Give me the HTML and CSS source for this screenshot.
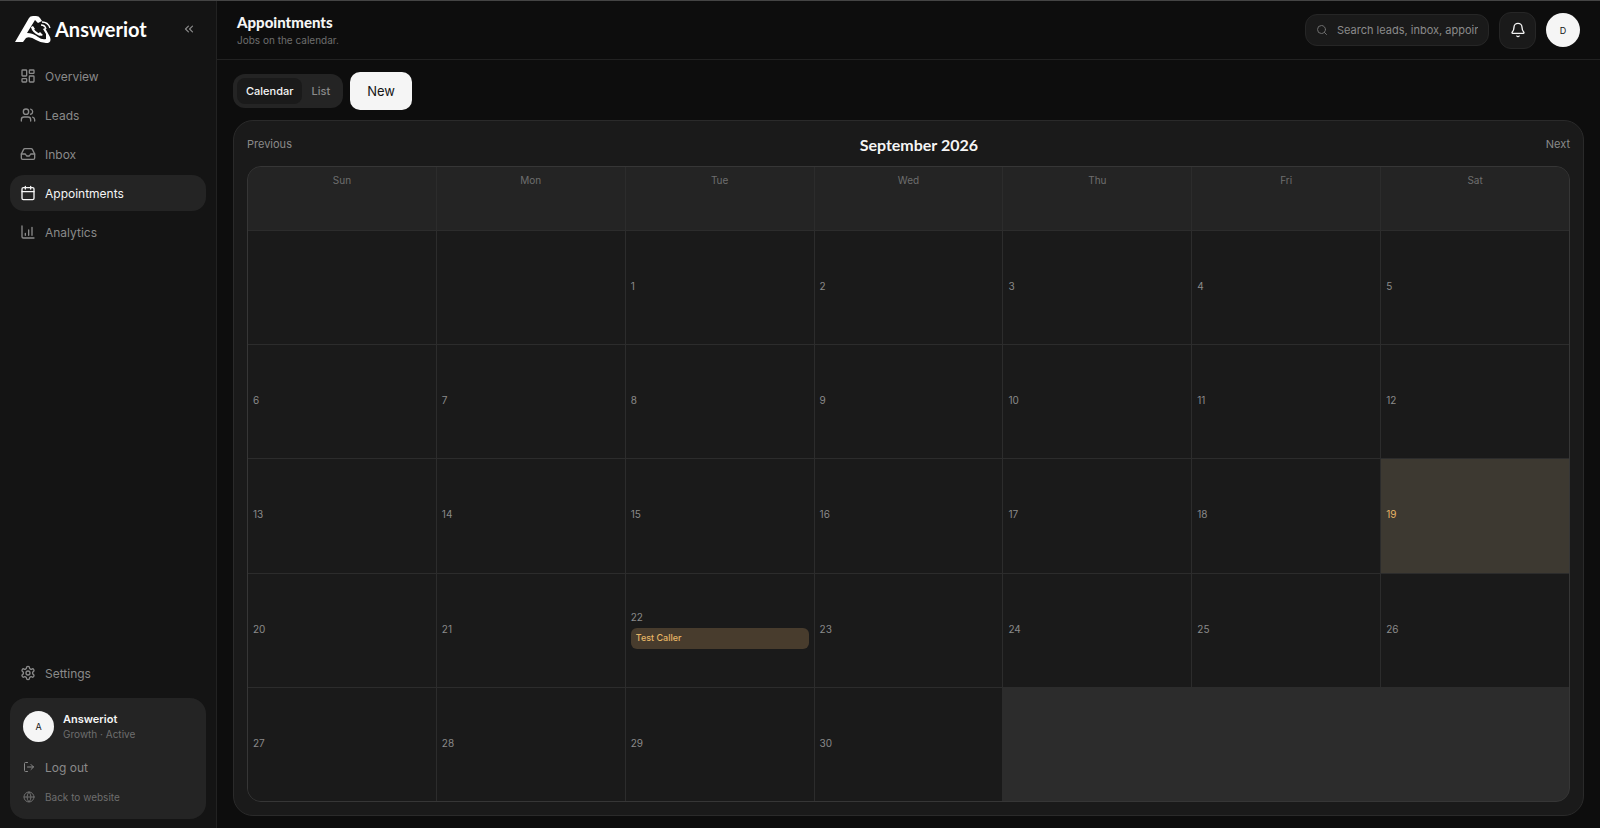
FILE: index.html
```html
<!DOCTYPE html>
<html lang="en">
  <head>
    <meta charset="UTF-8" />
    <meta name="viewport" content="width=device-width, initial-scale=1.0" />
    <title>Appointments - Answeriot</title>
    <link rel="stylesheet" href="styles.css">
  </head>
  <body>
    <div class="app">
      <!-- Sidebar -->
      <aside class="sidebar">
        <div class="brand">
          <a class="logo" href="#">
            <svg class="logo-mark" viewBox="0 0 36 28" fill="#fff">
              <path d="M0 27 L14 3 Q15 1 18 1 H21 Q24 1 25 3 L27 6 L23 8 L20 5 L12 18 Q18 18 23 22 Q27 25 31 24 L31 19 L28 14 L30 13 L35 22 Q37 28 31 28 Q26 28 21 25 Q15 21 11 23 L8 27 Z" />
              <path d="M17 12 Q18 17 25 20" fill="none" stroke="#fff" stroke-width="2" />
              <path d="M16 12 L18 11 L20 14 L18 15 Z M23 19 L25 17 L28 20 L26 21 Z" />
              <path d="M26 10 Q30 10 31 14 M27 7 Q33 7 35 13" fill="none" stroke="#fff" stroke-width="1.3" />
            </svg>
            <span>Answeriot</span>
          </a>
          <button class="collapse" aria-label="Collapse sidebar">
            <svg class="icon" viewBox="0 0 24 24"><path d="m11 17-5-5 5-5M18 17l-5-5 5-5" /></svg>
          </button>
        </div>

        <nav class="nav">
          <a href="#">
            <svg class="icon" viewBox="0 0 24 24"><rect x="3" y="3" width="7" height="9" rx="1" /><rect x="14" y="3" width="7" height="5" rx="1" /><rect x="14" y="12" width="7" height="9" rx="1" /><rect x="3" y="16" width="7" height="5" rx="1" /></svg>
            Overview
          </a>
          <a href="#">
            <svg class="icon" viewBox="0 0 24 24"><path d="M16 21v-2a4 4 0 0 0-4-4H6a4 4 0 0 0-4 4v2" /><circle cx="9" cy="7" r="4" /><path d="M22 21v-2a4 4 0 0 0-3-3.87M16 3.13a4 4 0 0 1 0 7.75" /></svg>
            Leads
          </a>
          <a href="#">
            <svg class="icon" viewBox="0 0 24 24"><path d="M22 12h-6l-2 3h-4l-2-3H2" /><path d="M5.45 5.11 2 12v6a2 2 0 0 0 2 2h16a2 2 0 0 0 2-2v-6l-3.45-6.89A2 2 0 0 0 16.76 4H7.24a2 2 0 0 0-1.79 1.11z" /></svg>
            Inbox
          </a>
          <a href="#" class="active">
            <svg class="icon" viewBox="0 0 24 24"><path d="M8 2v4M16 2v4M3 10h18" /><rect x="3" y="4" width="18" height="18" rx="2" /></svg>
            Appointments
          </a>
          <a href="#">
            <svg class="icon" viewBox="0 0 24 24"><path d="M3 3v16a2 2 0 0 0 2 2h16M8 17v-3M13 17V9M18 17V5" /></svg>
            Analytics
          </a>
        </nav>

        <nav class="nav nav-bottom">
          <a href="#">
            <svg class="icon" viewBox="0 0 24 24"><path d="M12.22 2h-.44a2 2 0 0 0-2 2v.18a2 2 0 0 1-1 1.73l-.43.25a2 2 0 0 1-2 0l-.15-.08a2 2 0 0 0-2.73.73l-.22.38a2 2 0 0 0 .73 2.73l.15.1a2 2 0 0 1 1 1.72v.51a2 2 0 0 1-1 1.74l-.15.09a2 2 0 0 0-.73 2.73l.22.38a2 2 0 0 0 2.73.73l.15-.08a2 2 0 0 1 2 0l.43.25a2 2 0 0 1 1 1.73V20a2 2 0 0 0 2 2h.44a2 2 0 0 0 2-2v-.18a2 2 0 0 1 1-1.73l.43-.25a2 2 0 0 1 2 0l.15.08a2 2 0 0 0 2.73-.73l.22-.39a2 2 0 0 0-.73-2.73l-.15-.08a2 2 0 0 1-1-1.74v-.5a2 2 0 0 1 1-1.74l.15-.09a2 2 0 0 0 .73-2.73l-.22-.38a2 2 0 0 0-2.73-.73l-.15.08a2 2 0 0 1-2 0l-.43-.25a2 2 0 0 1-1-1.73V4a2 2 0 0 0-2-2z" /><circle cx="12" cy="12" r="3" /></svg>
            Settings
          </a>
        </nav>

        <div class="account">
          <div class="account-head">
            <span class="avatar avatar-sm">A</span>
            <div>
              <div class="account-name">Answeriot</div>
              <div class="account-plan">Growth · Active</div>
            </div>
          </div>
          <button class="account-link">
            <svg class="icon" viewBox="0 0 24 24"><path d="M9 21H5a2 2 0 0 1-2-2V5a2 2 0 0 1 2-2h4M16 17l5-5-5-5M21 12H9" /></svg>
            Log out
          </button>
          <a class="account-link site-link" href="#">
            <svg class="icon" viewBox="0 0 24 24"><circle cx="12" cy="12" r="10" /><path d="M12 2a14.5 14.5 0 0 0 0 20 14.5 14.5 0 0 0 0-20M2 12h20" /></svg>
            Back to website
          </a>
        </div>
      </aside>

      <div class="main">
        <header class="topbar">
          <div>
            <h1>Appointments</h1>
            <p>Jobs on the calendar.</p>
          </div>
          <div class="topbar-actions">
            <label class="search">
              <svg class="icon" viewBox="0 0 24 24"><circle cx="11" cy="11" r="8" /><path d="m21 21-4.3-4.3" /></svg>
              <input type="text" aria-label="Search" placeholder="Search leads, inbox, appointments" />
            </label>
            <button class="bell" aria-label="Notifications">
              <svg class="icon" viewBox="0 0 24 24"><path d="M10.27 21a2 2 0 0 0 3.46 0M3.26 15.33A1 1 0 0 0 4 17h16a1 1 0 0 0 .74-1.67C19.41 13.96 18 12.5 18 8A6 6 0 0 0 6 8c0 4.5-1.41 5.96-2.74 7.33" /></svg>
            </button>
            <button class="avatar">D</button>
          </div>
        </header>

        <main class="content">
          <div class="toolbar">
            <div class="tabs">
              <button class="tab active">Calendar</button>
              <button class="tab">List</button>
            </div>
            <button class="new-btn">New</button>
          </div>

          <section class="panel">
            <div class="month-nav">
              <button>Previous</button>
              <h2>September 2026</h2>
              <button>Next</button>
            </div>

            <div class="calendar">
              <div class="weekday">Sun</div>
              <div class="weekday">Mon</div>
              <div class="weekday">Tue</div>
              <div class="weekday">Wed</div>
              <div class="weekday">Thu</div>
              <div class="weekday">Fri</div>
              <div class="weekday">Sat</div>

              <div class="day"></div>
              <div class="day"></div>
              <div class="day">1</div>
              <div class="day">2</div>
              <div class="day">3</div>
              <div class="day">4</div>
              <div class="day">5</div>

              <div class="day">6</div>
              <div class="day">7</div>
              <div class="day">8</div>
              <div class="day">9</div>
              <div class="day">10</div>
              <div class="day">11</div>
              <div class="day">12</div>

              <div class="day">13</div>
              <div class="day">14</div>
              <div class="day">15</div>
              <div class="day">16</div>
              <div class="day">17</div>
              <div class="day">18</div>
              <div class="day today">19</div>

              <div class="day">20</div>
              <div class="day">21</div>
              <div class="day">
                22
                <button class="event">Test Caller</button>
              </div>
              <div class="day">23</div>
              <div class="day">24</div>
              <div class="day">25</div>
              <div class="day">26</div>

              <div class="day">27</div>
              <div class="day">28</div>
              <div class="day">29</div>
              <div class="day">30</div>
            </div>
          </section>
        </main>
      </div>
    </div>
  </body>
</html>
```
FILE: styles.css
```css
* {
  box-sizing: border-box;
}
body {
  margin: 0;
  font-family: Inter, "Liberation Sans", sans-serif;
  font-size: 12px;
  background-color: #0d0d0d;
  color: #f5f5f5;
}
h1,
h2,
p {
  margin: 0;
}
a {
  color: inherit;
  text-decoration: none;
}
button {
  padding: 0;
  border: none;
  background: none;
  color: inherit;
  font: inherit;
  cursor: pointer;
}
.icon {
  width: 16px;
  height: 16px;
  flex-shrink: 0;
  fill: none;
  stroke: currentColor;
  stroke-width: 2;
  stroke-linecap: round;
  stroke-linejoin: round;
}
.app {
  display: flex;
  min-height: 100vh;
  border-top: 1px solid #444;
}

/* sidebar */
.sidebar {
  display: flex;
  flex-direction: column;
  width: 217px;
  flex-shrink: 0;
  padding: 9px 10px;
  background-color: #141414;
  border-right: 1px solid #222;
}
.brand {
  display: flex;
  align-items: center;
  justify-content: space-between;
  height: 38px;
  margin-bottom: 10px;
  padding: 0 10px 0 5px;
}
.logo {
  display: flex;
  align-items: center;
  gap: 4px;
  color: #fff;
  font-family: Lato, sans-serif;
  font-size: 20px;
  font-weight: 700;
}
.logo-mark {
  width: 36px;
  height: 28px;
}
.collapse {
  display: flex;
  color: #8a8a8a;
}
.collapse .icon {
  width: 14px;
  height: 14px;
}
.nav {
  display: flex;
  flex-direction: column;
  gap: 3px;
}
.nav a {
  display: flex;
  align-items: center;
  gap: 9px;
  height: 36px;
  padding: 0 10px;
  border-radius: 14px;
  color: #8a8a8a;
}
.nav a.active {
  background-color: #242424;
  color: #f5f5f5;
}
.nav-bottom {
  margin-top: auto;
}
.account {
  margin-top: 7px;
  padding: 13px;
  height: 121px;
  border-radius: 16px;
  background-color: #242424;
}
.account-head {
  display: flex;
  align-items: center;
  gap: 9px;
  margin-bottom: 10px;
}
.account-name {
  font-size: 11px;
  line-height: 15px;
  font-weight: 600;
}
.account-plan {
  font-size: 10px;
  line-height: 15px;
  color: #6e6e6e;
}
.account-link {
  display: flex;
  align-items: center;
  gap: 10px;
  height: 30px;
  color: #8a8a8a;
}
.account-link .icon {
  width: 12px;
  height: 12px;
}
.site-link {
  font-size: 10px;
  color: #6e6e6e;
}
.avatar {
  display: flex;
  align-items: center;
  justify-content: center;
  width: 34px;
  height: 34px;
  border-radius: 50%;
  background-color: #f5f5f5;
  color: #141414;
  font-size: 9px;
}
.avatar-sm {
  width: 31px;
  height: 31px;
}

/* top bar */
.main {
  display: flex;
  flex-direction: column;
  flex: 1;
  min-width: 0;
}
.topbar {
  display: flex;
  align-items: center;
  justify-content: space-between;
  height: 59px;
  padding: 0 20px;
  border-bottom: 1px solid #222;
}
.topbar h1 {
  font-family: Lato, sans-serif;
  font-size: 15px;
  line-height: 20px;
  font-weight: 900;
}
.topbar p {
  font-size: 10px;
  line-height: 16px;
  color: #6e6e6e;
}
.topbar-actions {
  display: flex;
  align-items: center;
  gap: 10px;
}
.search {
  display: flex;
  align-items: center;
  gap: 9px;
  width: 184px;
  height: 32px;
  padding: 0 10px;
  border: 1px solid #262626;
  border-radius: 12px;
  background-color: #1a1a1a;
  color: #6e6e6e;
}
.search .icon {
  width: 12px;
  height: 12px;
}
.search input {
  flex: 1;
  min-width: 0;
  padding: 0;
  border: none;
  outline: none;
  background: none;
  color: #f5f5f5;
  font: inherit;
  font-size: 11px;
}
.search input::placeholder {
  color: #8a8a8a;
}
.bell {
  display: flex;
  align-items: center;
  justify-content: center;
  width: 37px;
  height: 37px;
  border: 1px solid #262626;
  border-radius: 12px;
  background-color: #1a1a1a;
}

/* content */
.content {
  display: flex;
  flex-direction: column;
  flex: 1;
  gap: 10px;
  padding: 12px 16px;
}
.toolbar {
  display: flex;
  align-items: center;
  gap: 7px;
}
.tabs {
  display: flex;
  height: 34px;
  padding: 4px;
  border-radius: 12px;
  background-color: #242424;
}
.tab {
  padding: 0 9px;
  border-radius: 8px;
  color: #8a8a8a;
  font-size: 11px;
  font-weight: 500;
}
.tab.active {
  background-color: #1a1a1a;
  color: #f5f5f5;
}
.new-btn {
  height: 38px;
  padding: 0 17px;
  border-radius: 10px;
  background-color: #f5f5f5;
  color: #141414;
  font-size: 13px;
}
.panel {
  display: flex;
  flex-direction: column;
  flex: 1;
  padding: 13px;
  border: 1px solid #2a2a2a;
  border-radius: 20px;
  background-color: #1a1a1a;
}
.month-nav {
  display: flex;
  align-items: center;
  justify-content: space-between;
  height: 20px;
  margin-bottom: 12px;
}
.month-nav button {
  color: #8a8a8a;
  font-size: 11px;
}
.month-nav h2 {
  font-family: Lato, sans-serif;
  font-size: 16px;
  font-weight: 700;
}
.calendar {
  display: grid;
  grid-template-columns: repeat(7, 1fr);
  grid-template-rows: 63px repeat(5, 1fr);
  gap: 1px;
  flex: 1;
  border: 1px solid #363636;
  border-radius: 14px;
  background-color: #2c2c2c;
  overflow: hidden;
}
.weekday {
  padding-top: 6px;
  background-color: #242424;
  color: #6e6e6e;
  font-size: 10px;
  line-height: 15px;
  text-align: center;
}
.day {
  display: flex;
  flex-direction: column;
  justify-content: center;
  padding: 0 5px 3px;
  background-color: #1a1a1a;
  color: #8a8a8a;
  font-size: 10px;
  line-height: 16px;
}
.day.today {
  background-color: #3d3931;
  color: #e6b566;
}
.event {
  height: 21px;
  margin-top: 3px;
  padding: 0 5px;
  border-radius: 6px;
  background-color: #483c2d;
  color: #e6b566;
  font-size: 9px;
  font-weight: 500;
  text-align: left;
}
```
